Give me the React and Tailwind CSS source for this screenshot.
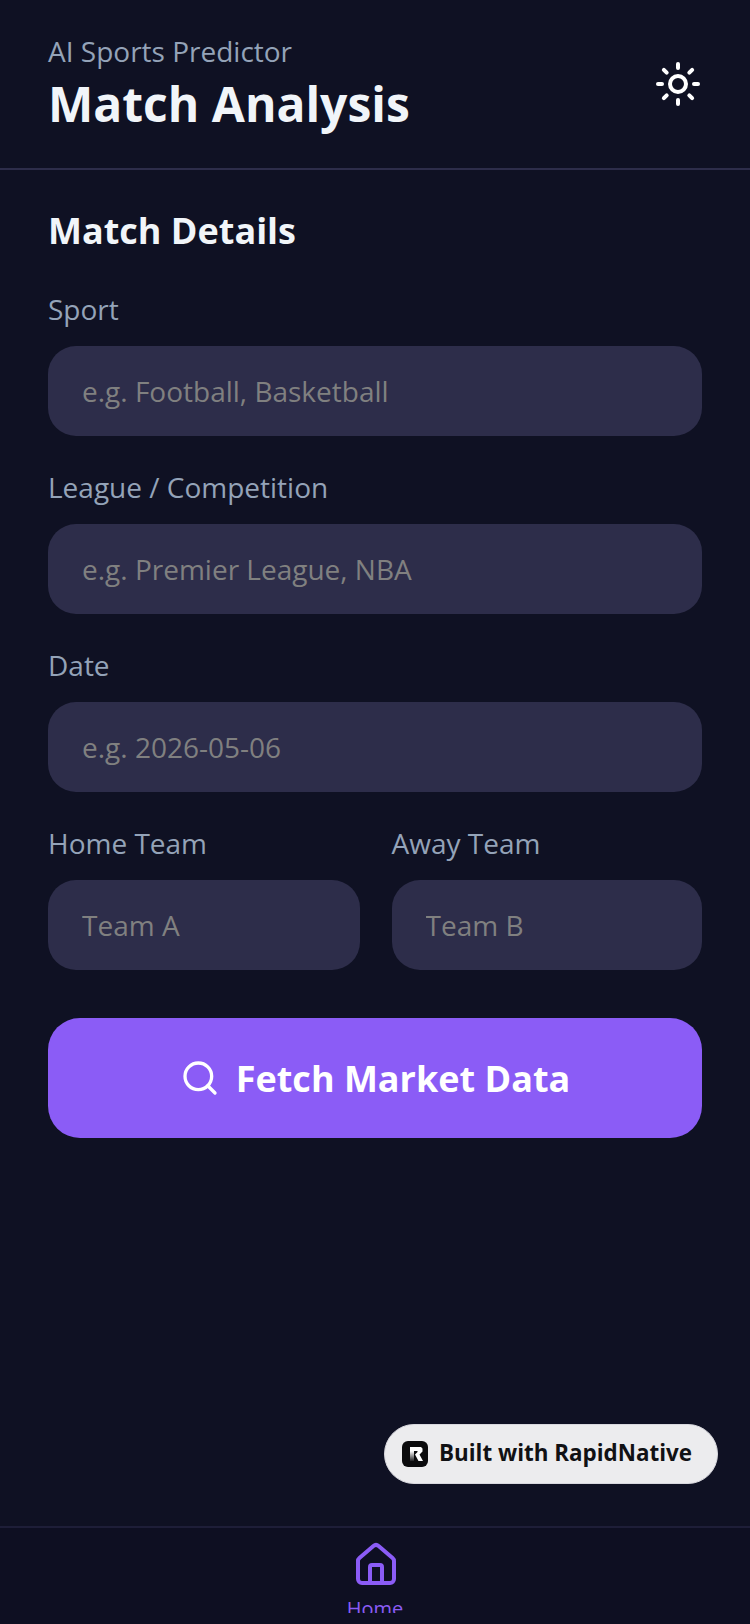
import React from "react";
import { Sun, Search, House } from "lucide-react";

const Field = ({ label, placeholder, className = "" }) => (
  <div className={`flex flex-col ${className}`}>
    <label className="mb-[19px] text-[28px] leading-[36px] text-[#94a3b8]">{label}</label>
    <input
      type="text"
      placeholder={placeholder}
      className="h-[90px] w-full rounded-[28px] bg-[#2d2d4a] px-[34px] text-[28px] text-white outline-none placeholder:text-[#808080]"
    />
  </div>
);

const BuiltWithBadge = () => (
  <div className="absolute left-[384px] top-[1424px] flex h-[60px] w-[334px] items-center rounded-full border border-[#d8d8de] bg-[#ececee] pl-[17px]">
    <svg width="26" height="26" viewBox="0 0 26 26" className="shrink-0">
      <defs>
        <linearGradient id="stemFade" x1="0" y1="0" x2="0" y2="1">
          <stop offset="0" stopColor="#fff" />
          <stop offset="1" stopColor="#fff" stopOpacity="0.1" />
        </linearGradient>
      </defs>
      <rect width="26" height="26" rx="6" fill="#0b0b0d" />
      <path d="M8 6h11l1.5 1.5v3l-3 3 3.5 6.5h-4.5l-3.5-6.5 2.5-2.5v-1H8z" fill="#fff" />
      <rect x="8" y="10" width="4" height="10" fill="url(#stemFade)" />
    </svg>
    <span className="ml-[11px] pb-[2px] text-[22.4px] font-bold leading-none text-[#111114]">
      Built with RapidNative
    </span>
  </div>
);

export default function App() {
  return (
    <div className="relative flex h-[1624px] w-[750px] flex-col overflow-hidden bg-[#0f1123] font-['Open_Sans',sans-serif]">
      {/* Header */}
      <header className="flex h-[170px] shrink-0 items-center justify-between border-b-2 border-[#2d2d4a] px-[48px]">
        <div className="flex flex-col pt-[2px]">
          <span className="mb-[4px] text-[28px] leading-[34px] text-[#94a3b8]">AI Sports Predictor</span>
          <h1 className="text-[48px] font-bold leading-[64px] text-[#f1f5f9]">Match Analysis</h1>
        </div>
        <Sun size={48} strokeWidth={2} className="text-white" />
      </header>

      {/* Form */}
      <main className="flex flex-1 flex-col px-[48px] pt-[37px]">
        <h2 className="mb-[36px] text-[36px] font-bold leading-[48px] text-[#f1f5f9]">Match Details</h2>
        <div className="flex flex-col gap-[33px]">
          <Field label="Sport" placeholder="e.g. Football, Basketball" />
          <Field label="League / Competition" placeholder="e.g. Premier League, NBA" />
          <Field label="Date" placeholder="e.g. 2026-05-06" />
          <div className="flex gap-[31.5px]">
            <Field label="Home Team" placeholder="Team A" className="w-[312px]" />
            <Field label="Away Team" placeholder="Team B" className="flex-1" />
          </div>
        </div>
        <button className="mt-[48px] flex h-[120px] items-center justify-center gap-[16px] rounded-[32px] bg-[#8b5cf6] text-[36px] font-bold text-white">
          <Search size={40} strokeWidth={2} />
          <span className="pt-[2px]">Fetch Market Data</span>
        </button>
      </main>

      {/* Bottom nav, the label is cut off by the bar's inner height */}
      <nav className="flex h-[98px] shrink-0 flex-col items-center border-t-2 border-[#1e1e38] bg-[#0e0f22] pt-[13px]">
        <div className="flex h-[72px] flex-col items-center overflow-hidden">
          <House size={48} strokeWidth={2} className="ml-[2px] shrink-0 text-[#8b5cf6]" />
          <span className="mt-[6px] text-[20px] leading-[28px] text-[#8b5cf6]">Home</span>
        </div>
      </nav>

      <BuiltWithBadge />
    </div>
  );
}
